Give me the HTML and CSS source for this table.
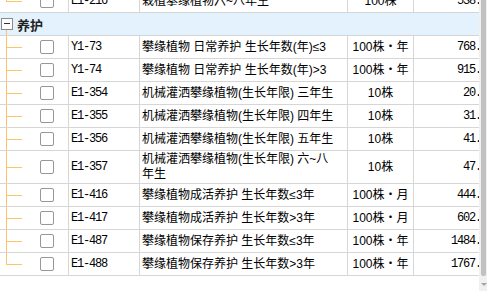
FILE: index.html
```html
<!DOCTYPE html>
<html lang="zh-CN">
<head>
    <meta charset="UTF-8">
    <title>定额列表</title>
    <link rel="stylesheet" href="styles.css">
</head>
<body>
    <div class="frame">
        <div class="grid">
            <div class="rows">
                <div class="row first">
                    <div class="cell tree last"><span class="check"></span></div>
                    <div class="cell code">E1-216</div>
                    <div class="cell name">栽植攀缘植物六~八年生</div>
                    <div class="cell unit">100株</div>
                    <div class="cell price">538.46</div>
                </div>

                <div class="group">
                    <span class="toggle"></span>
                    <span class="group-title">养护</span>
                </div>

                <div class="row">
                    <div class="cell tree"><span class="check"></span></div>
                    <div class="cell code">Y1-73</div>
                    <div class="cell name">攀缘植物 日常养护 生长年数(年)≤3</div>
                    <div class="cell unit">100株・年</div>
                    <div class="cell price">768.81</div>
                </div>
                <div class="row">
                    <div class="cell tree"><span class="check"></span></div>
                    <div class="cell code">Y1-74</div>
                    <div class="cell name">攀缘植物 日常养护 生长年数(年)&gt;3</div>
                    <div class="cell unit">100株・年</div>
                    <div class="cell price">915.12</div>
                </div>
                <div class="row">
                    <div class="cell tree"><span class="check"></span></div>
                    <div class="cell code">E1-354</div>
                    <div class="cell name">机械灌洒攀缘植物(生长年限) 三年生</div>
                    <div class="cell unit">10株</div>
                    <div class="cell price">20.95</div>
                </div>
                <div class="row">
                    <div class="cell tree"><span class="check"></span></div>
                    <div class="cell code">E1-355</div>
                    <div class="cell name">机械灌洒攀缘植物(生长年限) 四年生</div>
                    <div class="cell unit">10株</div>
                    <div class="cell price">31.27</div>
                </div>
                <div class="row">
                    <div class="cell tree"><span class="check"></span></div>
                    <div class="cell code">E1-356</div>
                    <div class="cell name">机械灌洒攀缘植物(生长年限) 五年生</div>
                    <div class="cell unit">10株</div>
                    <div class="cell price">41.46</div>
                </div>
                <div class="row">
                    <div class="cell tree"><span class="check"></span></div>
                    <div class="cell code">E1-357</div>
                    <div class="cell name">机械灌洒攀缘植物(生长年限) 六~八年生</div>
                    <div class="cell unit">10株</div>
                    <div class="cell price">47.88</div>
                </div>
                <div class="row">
                    <div class="cell tree"><span class="check"></span></div>
                    <div class="cell code">E1-416</div>
                    <div class="cell name">攀缘植物成活养护 生长年数≤3年</div>
                    <div class="cell unit">100株・月</div>
                    <div class="cell price">444.56</div>
                </div>
                <div class="row">
                    <div class="cell tree"><span class="check"></span></div>
                    <div class="cell code">E1-417</div>
                    <div class="cell name">攀缘植物成活养护 生长年数&gt;3年</div>
                    <div class="cell unit">100株・月</div>
                    <div class="cell price">602.03</div>
                </div>
                <div class="row">
                    <div class="cell tree"><span class="check"></span></div>
                    <div class="cell code">E1-487</div>
                    <div class="cell name">攀缘植物保存养护 生长年数≤3年</div>
                    <div class="cell unit">100株・年</div>
                    <div class="cell price">1484.27</div>
                </div>
                <div class="row">
                    <div class="cell tree last"><span class="check"></span></div>
                    <div class="cell code">E1-488</div>
                    <div class="cell name">攀缘植物保存养护 生长年数&gt;3年</div>
                    <div class="cell unit">100株・年</div>
                    <div class="cell price">1767.58</div>
                </div>
            </div>
        </div>
        <div class="scrollbar">
            <div class="thumb"></div>
            <div class="arrow"></div>
        </div>
    </div>
</body>
</html>
```

FILE: styles.css
```css
body {
    margin: 0;
    background: #fff;
    font-family: "Liberation Sans", "Noto Sans CJK SC", sans-serif;
    font-size: 12px;
    color: #000;
}
.frame {
    display: flex;
    height: 291px;
}
.grid {
    width: 479px;
    overflow: hidden;
}
.rows {
    width: 496px;
    margin-top: -10px;
}
.row {
    display: grid;
    grid-template-columns: 69px 71px 208px 66px 82px;
    min-height: 22px;
    border-bottom: 1px solid #d6d6d6;
}
.cell {
    display: flex;
    align-items: center;
    box-sizing: border-box;
    border-right: 1px solid #d6d6d6;
    padding: 1px 2px;
    line-height: 15px;
}
.cell.price {
    border-right: none;
    justify-content: flex-end;
    padding-right: 3px;
}

/* tree connector: vertical line plus a branch to each row */
.tree {
    padding: 0;
    background:
        linear-gradient(#fdc46a, #fdc46a) 6px 0 / 1px 100% no-repeat,
        linear-gradient(#fdc46a, #fdc46a) 6px 50% / 16px 1px no-repeat;
}
.tree.last {
    background:
        linear-gradient(#fdc46a, #fdc46a) 6px 0 / 1px 50% no-repeat,
        linear-gradient(#fdc46a, #fdc46a) 6px 50% / 16px 1px no-repeat;
}
.check {
    width: 14px;
    height: 14px;
    box-sizing: border-box;
    margin-left: 40px;
    border: 1px solid #979797;
    border-radius: 2px;
    background: #fff;
}
.code, .price {
    font-family: "Liberation Mono", monospace;
    letter-spacing: -1.2px;
}
.code {
    padding-left: 2px;
}
.name {
    padding-right: 12px;
}
.unit {
    justify-content: center;
}

.group {
    display: flex;
    align-items: center;
    height: 22px;
    border-bottom: 1px solid #d6d6d6;
    background:
        linear-gradient(#fdc46a, #fdc46a) 6px 100% / 1px 5px no-repeat,
        #e4f2fd;
}
.toggle {
    position: relative;
    width: 12px;
    height: 12px;
    box-sizing: border-box;
    margin-left: 1px;
    border: 1px solid #8a8a8a;
    background: #fff;
}
.toggle::after {
    content: "";
    position: absolute;
    left: 2px;
    top: 4px;
    width: 6px;
    height: 1px;
    background: #333;
}
.group-title {
    margin-left: 4px;
    font-family: "Noto Sans CJK SC", sans-serif;
    font-size: 13px;
    font-weight: bold;
    color: #222;
}

.scrollbar {
    display: flex;
    flex-direction: column;
    width: 8px;
    background: #f0f0f0;
}
.thumb {
    height: 276px;
    margin: 0 1px 0 2px;
    border-radius: 0 0 2px 2px;
    background: #c1c1c1;
}
.arrow {
    width: 0;
    height: 0;
    margin: 7px 0 0 2px;
    border-left: 3px solid transparent;
    border-right: 3px solid transparent;
    border-top: 3px solid #a3a3a3;
}
```
